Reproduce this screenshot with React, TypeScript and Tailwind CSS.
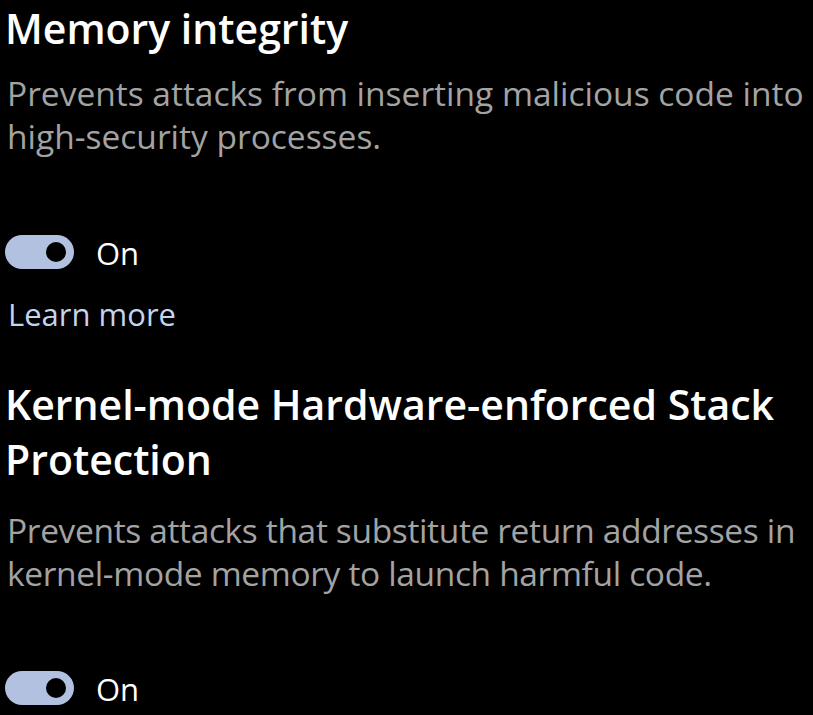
import React from 'react';

function Toggle() {
  return (
    <div className="flex items-center gap-[22px]">
      <div className="flex h-[34px] w-[69px] items-center justify-end rounded-full bg-[#b3c1e1] pr-[8px]">
        <div className="h-[20px] w-[20px] rounded-full bg-black" />
      </div>
      <span className="pt-[4px] text-[31px] leading-none text-white">On</span>
    </div>
  );
}

export default function App() {
  return (
    <div className="h-[715px] w-[813px] overflow-hidden bg-black pl-[5px] font-['Open_Sans',sans-serif]">
      <section>
        <h2 className="text-[41px] font-semibold leading-[56px] text-white">Memory integrity</h2>
        <p className="mt-[16px] pl-[2px] text-[33.5px] leading-[43px] text-[#a3a3a3]">
          Prevents attacks from inserting malicious code into high-security processes.
        </p>
        <div className="mt-[76px]">
          <Toggle />
        </div>
        <a className="mt-[22px] block pl-[3px] text-[31px] leading-[47px] text-[#c3d4ee]">Learn more</a>
      </section>
      <section className="mt-[39px]">
        <h2 className="text-[41px] font-semibold leading-[55px] text-white">
          Kernel-mode Hardware-enforced Stack Protection
        </h2>
        <p className="mt-[22px] pl-[2px] text-[33.5px] leading-[43px] tracking-[-0.35px] text-[#a3a3a3]">
          Prevents attacks that substitute return addresses in kernel-mode memory to launch harmful code.
        </p>
        <div className="mt-[75px]">
          <Toggle />
        </div>
      </section>
    </div>
  );
}
